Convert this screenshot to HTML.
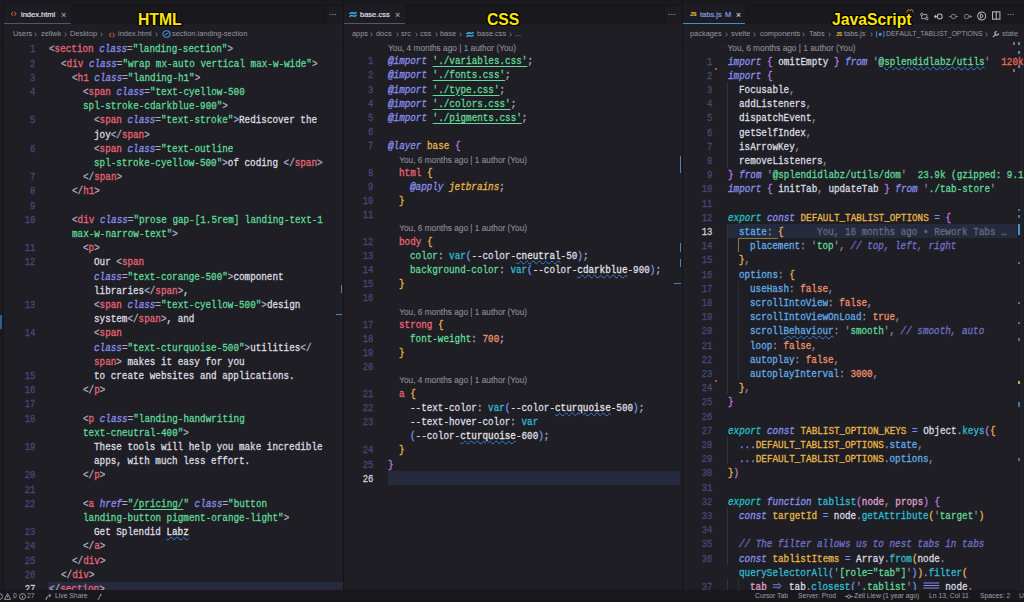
<!DOCTYPE html>
<html><head><meta charset="utf-8">
<style>
*{margin:0;padding:0;box-sizing:border-box}
html,body{width:1024px;height:602px;overflow:hidden;background:#1a191d}
body{position:relative;font-family:"Liberation Sans",sans-serif}
.pane{position:absolute;top:0;height:590px;background:#1f1e24;overflow:hidden}
.pane::before{content:"";position:absolute;left:0;right:0;top:0;height:5px;background:#1a191d}
.tabs{position:absolute;left:0;top:5px;right:0;height:19px;background:#19181c;border-top:1px solid #151418}
.tab{position:absolute;left:0;top:-1px;height:19px;background:#1d1c22;border-bottom:1px solid #555565}
.tt{position:absolute;top:0;line-height:20.5px;font-size:8px;transform-origin:0 0;transform:scaleX(0.94);color:#e6e6ec;-webkit-text-stroke:0.15px currentColor;white-space:nowrap}
.crumbs{position:absolute;left:0;top:24px;right:0;height:17.5px;background:#1f1e24;border-bottom:1px solid #1b1a1f}
.cb{position:absolute;top:0;line-height:20.5px;font-size:8px;color:#9696a0;transform-origin:0 0;transform:scaleX(0.925);white-space:nowrap}
.chev{position:absolute;top:0;line-height:20px;font-size:8px;color:#77777f}
.code,.ln{position:absolute;font-family:"Liberation Mono",monospace;font-size:10.4px;line-height:14.18px;height:14.18px;white-space:pre;-webkit-text-stroke:0.28px currentColor}
.code{transform-origin:0 0;transform:scaleX(0.894)}
.ln{color:#46487a;text-align:right;transform-origin:100% 0;transform:scaleX(0.86)}
.ln.cur{color:#d2d2da}
.curl{position:absolute;background:#262a3d}
.cl{position:absolute;font-size:8.3px;line-height:12.4px;color:#8e8e98;-webkit-text-stroke:0.1px currentColor;white-space:pre}
.w{color:#dedee4}
.pd{color:#8e8ea2}
.p{color:#acacc0}
.t{color:#ea6678}
.a{color:#8b90ee;font-style:italic}
.s{color:#60db9a}
.su{color:#60db9a;text-decoration:underline;text-decoration-thickness:1px;text-underline-offset:1.5px}
.sq{text-decoration:underline wavy #3a7fdc;text-decoration-thickness:0.8px;color:#e6e6ea}
.sqs{color:#60db9a;text-decoration:underline wavy #3a7fdc;text-decoration-thickness:0.8px}
.k{color:#8b90ee;font-style:italic}
.kt{color:#22c2c6;font-style:italic}
.op{color:#8088ea}
.y{color:#e8b84a}
.yi{color:#e8b84a;font-style:italic}
.pu{color:#c07ae0}
.cy{color:#2fbfd6}
.bl{color:#6c9df2}
.n{color:#f0936a}
.lb{color:#62aeea}
.lbq{color:#62aeea;text-decoration:underline wavy #3a7fdc;text-decoration-thickness:0.8px}
.cm{color:#6f72c8;font-style:italic}
.pk{color:#e0a2d0}
.rd{color:#ec6b5c}
.gl{color:#686b82}
.label{position:absolute;font-family:"Liberation Sans",sans-serif;font-weight:bold;font-size:17px;color:#ffe600;line-height:17px;transform-origin:0 0;transform:scaleX(0.925);white-space:nowrap;text-shadow:-1px -1px 0 #000,1px -1px 0 #000,-1px 1px 0 #000,1px 1px 0 #000,0 1.4px 0 #000,0 -1.4px 0 #000,1.4px 0 0 #000,-1.4px 0 0 #000}
.status{position:absolute;left:0;top:590px;width:1024px;height:12px;background:#19181d;border-bottom:2.7px solid #151418;color:#a0a0a8;font-size:7.3px;line-height:12px;white-space:nowrap}
.status span{transform-origin:0 0;transform:scaleX(0.93)}
.status span{position:absolute;top:0}
.rule{position:absolute;top:41px;bottom:0;width:1px;background:#26252c}
.mk{position:absolute;background:#3a86c8}
svg{position:absolute;overflow:visible}
.crumbs svg{margin-top:1px}
</style></head><body>

<!-- HTML pane -->
<div class="pane" style="left:4px;width:339.5px">
  <div class="tabs">
    <div class="tab" style="width:67px">
      <svg style="left:7.3px;top:6px" width="5.5" height="5.5" viewBox="0 0 6 6"><path d="M2.2 0.8 L0.6 3 L2.2 5.2 M3.8 0.8 L5.4 3 L3.8 5.2" stroke="#c05a3a" stroke-width="1.1" fill="none"/></svg>
      <span class="tt" style="left:17.3px">index.html</span>
      <span class="tt" style="left:57px;color:#a8a8b0;font-size:9.5px">×</span>
    </div>
    <div style="position:absolute;left:321px;top:0;width:18px;height:19px;background:#1c1b20;border-left:1px solid #161519"></div>
    <span class="tt" style="left:325px;color:#b0b0b8;font-size:8px;line-height:17px">···</span>
  </div>
  <div class="crumbs">
    <span class="cb" style="left:8.7px">Users</span><svg class="chv" style="left:29.7px;top:6.6px" width="3" height="5" viewBox="0 0 3 5"><path d="M0.8 0.7 L2.3 2.5 L0.8 4.3" stroke="#85858f" stroke-width="0.85" fill="none"/></svg>
    <span class="cb" style="left:37px">zellwk</span><svg class="chv" style="left:60.1px;top:6.6px" width="3" height="5" viewBox="0 0 3 5"><path d="M0.8 0.7 L2.3 2.5 L0.8 4.3" stroke="#85858f" stroke-width="0.85" fill="none"/></svg>
    <span class="cb" style="left:66px">Desktop</span><svg class="chv" style="left:96.2px;top:6.6px" width="3" height="5" viewBox="0 0 3 5"><path d="M0.8 0.7 L2.3 2.5 L0.8 4.3" stroke="#85858f" stroke-width="0.85" fill="none"/></svg>
    <svg style="left:105px;top:6.5px" width="6" height="6" viewBox="0 0 6 6"><path d="M2.2 0.8 L0.6 3 L2.2 5.2 M3.8 0.8 L5.4 3 L3.8 5.2" stroke="#b05a3c" stroke-width="1.1" fill="none"/></svg>
    <span class="cb" style="left:114px">index.html</span><svg class="chv" style="left:150.6px;top:6.6px" width="3" height="5" viewBox="0 0 3 5"><path d="M0.8 0.7 L2.3 2.5 L0.8 4.3" stroke="#85858f" stroke-width="0.85" fill="none"/></svg>
    <svg style="left:157.5px;top:5px" width="9" height="8" viewBox="0 0 9 8"><ellipse cx="4.5" cy="4" rx="3.6" ry="3.2" stroke="#4f8fdc" stroke-width="1.1" fill="none"/><path d="M2.5 5 L6.5 3" stroke="#4f8fdc" stroke-width="1"/></svg>
    <span class="cb" style="left:167.5px">section.landing-section</span>
  </div>
    <div class="mk" style="left:336.5px;top:285px;width:1.5px;height:7.5px"></div>
  <div class="mk" style="left:332px;top:313.5px;width:6px;height:1.2px"></div>
  <div class="ed">
<div class="ln" style="top:42.40px;right:308.50px">1</div>
<div class="code" style="top:42.40px;left:45.40px"><span class="p">&lt;</span><span class="t">section</span><span class="w"> </span><span class="a">class</span><span class="p">=</span><span class="s">&quot;landing-section&quot;</span><span class="p">&gt;</span></div>
<div class="ln" style="top:56.60px;right:308.50px">2</div>
<div class="code" style="top:56.60px;left:56.56px"><span class="p">&lt;</span><span class="t">div</span><span class="w"> </span><span class="a">class</span><span class="p">=</span><span class="s">&quot;wrap mx-auto vertical max-w-wide&quot;</span><span class="p">&gt;</span></div>
<div class="ln" style="top:70.80px;right:308.50px">3</div>
<div class="code" style="top:70.80px;left:67.72px"><span class="p">&lt;</span><span class="t">h1</span><span class="w"> </span><span class="a">class</span><span class="p">=</span><span class="s">&quot;landing-h1&quot;</span><span class="p">&gt;</span></div>
<div class="ln" style="top:85.00px;right:308.50px">4</div>
<div class="code" style="top:85.00px;left:78.88px"><span class="p">&lt;</span><span class="t">span</span><span class="w"> </span><span class="a">class</span><span class="p">=</span><span class="s">&quot;text-cyellow-500</span></div>
<div class="code" style="top:99.20px;left:78.88px"><span class="s">spl-stroke-cdarkblue-900&quot;</span><span class="p">&gt;</span></div>
<div class="ln" style="top:113.40px;right:308.50px">5</div>
<div class="code" style="top:113.40px;left:90.04px"><span class="p">&lt;</span><span class="t">span</span><span class="w"> </span><span class="a">class</span><span class="p">=</span><span class="s">&quot;text-stroke&quot;</span><span class="p">&gt;</span><span class="w">Rediscover the</span></div>
<div class="code" style="top:127.60px;left:90.04px"><span class="w">joy</span><span class="p">&lt;/</span><span class="t">span</span><span class="p">&gt;</span></div>
<div class="ln" style="top:141.80px;right:308.50px">6</div>
<div class="code" style="top:141.80px;left:90.04px"><span class="p">&lt;</span><span class="t">span</span><span class="w"> </span><span class="a">class</span><span class="p">=</span><span class="s">&quot;text-outline</span></div>
<div class="code" style="top:156.00px;left:90.04px"><span class="s">spl-stroke-cyellow-500&quot;</span><span class="p">&gt;</span><span class="w">of coding </span><span class="p">&lt;/</span><span class="t">span</span><span class="p">&gt;</span></div>
<div class="ln" style="top:170.20px;right:308.50px">7</div>
<div class="code" style="top:170.20px;left:78.88px"><span class="p">&lt;/</span><span class="t">span</span><span class="p">&gt;</span></div>
<div class="ln" style="top:184.40px;right:308.50px">8</div>
<div class="code" style="top:184.40px;left:67.72px"><span class="p">&lt;/</span><span class="t">h1</span><span class="p">&gt;</span></div>
<div class="ln" style="top:198.60px;right:308.50px">9</div>
<div class="code" style="top:198.60px;left:45.40px"></div>
<div class="ln" style="top:212.80px;right:308.50px">10</div>
<div class="code" style="top:212.80px;left:67.72px"><span class="p">&lt;</span><span class="t">div</span><span class="w"> </span><span class="a">class</span><span class="p">=</span><span class="s">&quot;prose gap-[1.5rem] landing-text-1</span></div>
<div class="code" style="top:227.00px;left:67.72px"><span class="s">max-w-narrow-text&quot;</span><span class="p">&gt;</span></div>
<div class="ln" style="top:241.20px;right:308.50px">11</div>
<div class="code" style="top:241.20px;left:78.88px"><span class="p">&lt;</span><span class="t">p</span><span class="p">&gt;</span></div>
<div class="ln" style="top:255.40px;right:308.50px">12</div>
<div class="code" style="top:255.40px;left:90.04px"><span class="w">Our </span><span class="p">&lt;</span><span class="t">span</span></div>
<div class="code" style="top:269.60px;left:90.04px"><span class="a">class</span><span class="p">=</span><span class="s">&quot;text-corange-500&quot;</span><span class="p">&gt;</span><span class="w">component</span></div>
<div class="code" style="top:283.80px;left:90.04px"><span class="w">libraries</span><span class="p">&lt;/</span><span class="t">span</span><span class="p">&gt;</span><span class="w">,</span></div>
<div class="ln" style="top:298.00px;right:308.50px">13</div>
<div class="code" style="top:298.00px;left:90.04px"><span class="p">&lt;</span><span class="t">span</span><span class="w"> </span><span class="a">class</span><span class="p">=</span><span class="s">&quot;text-cyellow-500&quot;</span><span class="p">&gt;</span><span class="w">design</span></div>
<div class="code" style="top:312.20px;left:90.04px"><span class="w">system</span><span class="p">&lt;/</span><span class="t">span</span><span class="p">&gt;</span><span class="w">, and</span></div>
<div class="ln" style="top:326.40px;right:308.50px">14</div>
<div class="code" style="top:326.40px;left:90.04px"><span class="p">&lt;</span><span class="t">span</span></div>
<div class="code" style="top:340.60px;left:90.04px"><span class="a">class</span><span class="p">=</span><span class="s">&quot;text-cturquoise-500&quot;</span><span class="p">&gt;</span><span class="w">utilities</span><span class="p">&lt;/</span></div>
<div class="code" style="top:354.80px;left:90.04px"><span class="t">span</span><span class="p">&gt;</span><span class="w"> makes it easy for you</span></div>
<div class="ln" style="top:369.00px;right:308.50px">15</div>
<div class="code" style="top:369.00px;left:90.04px"><span class="w">to create websites and applications.</span></div>
<div class="ln" style="top:383.20px;right:308.50px">16</div>
<div class="code" style="top:383.20px;left:78.88px"><span class="p">&lt;/</span><span class="t">p</span><span class="p">&gt;</span></div>
<div class="ln" style="top:397.40px;right:308.50px">17</div>
<div class="code" style="top:397.40px;left:45.40px"></div>
<div class="ln" style="top:411.60px;right:308.50px">18</div>
<div class="code" style="top:411.60px;left:78.88px"><span class="p">&lt;</span><span class="t">p</span><span class="w"> </span><span class="a">class</span><span class="p">=</span><span class="s">&quot;landing-handwriting</span></div>
<div class="code" style="top:425.80px;left:78.88px"><span class="s">text-cneutral-400&quot;</span><span class="p">&gt;</span></div>
<div class="ln" style="top:440.00px;right:308.50px">19</div>
<div class="code" style="top:440.00px;left:90.04px"><span class="w">These tools will help you make incredible</span></div>
<div class="code" style="top:454.20px;left:90.04px"><span class="w">apps, with much less effort.</span></div>
<div class="ln" style="top:468.40px;right:308.50px">20</div>
<div class="code" style="top:468.40px;left:78.88px"><span class="p">&lt;/</span><span class="t">p</span><span class="p">&gt;</span></div>
<div class="ln" style="top:482.60px;right:308.50px">21</div>
<div class="code" style="top:482.60px;left:45.40px"></div>
<div class="ln" style="top:496.80px;right:308.50px">22</div>
<div class="code" style="top:496.80px;left:78.88px"><span class="p">&lt;</span><span class="t">a</span><span class="w"> </span><span class="a">href</span><span class="p">=</span><span class="s">&quot;</span><span class="su">/pricing/</span><span class="s">&quot;</span><span class="w"> </span><span class="a">class</span><span class="p">=</span><span class="s">&quot;button</span></div>
<div class="code" style="top:511.00px;left:78.88px"><span class="s">landing-button pigment-orange-light&quot;</span><span class="p">&gt;</span></div>
<div class="ln" style="top:525.20px;right:308.50px">23</div>
<div class="code" style="top:525.20px;left:90.04px"><span class="w">Get Splendid </span><span class="sq">Labz</span></div>
<div class="ln" style="top:539.40px;right:308.50px">24</div>
<div class="code" style="top:539.40px;left:78.88px"><span class="p">&lt;/</span><span class="t">a</span><span class="p">&gt;</span></div>
<div class="ln" style="top:553.60px;right:308.50px">25</div>
<div class="code" style="top:553.60px;left:67.72px"><span class="p">&lt;/</span><span class="t">div</span><span class="p">&gt;</span></div>
<div class="ln" style="top:567.80px;right:308.50px">26</div>
<div class="code" style="top:567.80px;left:56.56px"><span class="p">&lt;/</span><span class="t">div</span><span class="p">&gt;</span></div>
<div class="curl" style="top:581.60px;left:44.00px;width:295.00px;height:14.20px"></div>
<div class="ln cur" style="top:582.00px;right:308.50px">27</div>
<div class="code" style="top:582.00px;left:45.40px"><span class="p">&lt;/</span><span class="t">section</span><span class="p">&gt;</span></div>
  </div>
</div>
<div style="position:absolute;left:0;top:0;width:4px;height:590px;background:#1b1a1f;border-right:1px solid #151418"></div>
<div class="mk" style="left:0;top:315px;width:2px;height:14px;background:#2f5f8e"></div>

<!-- CSS pane -->
<div class="pane" style="left:344px;width:337.5px">
  <div class="tabs">
    <div class="tab" style="width:61px">
      <svg style="left:5px;top:5.5px" width="8" height="7" viewBox="0 0 8 7"><path d="M0.5 3 Q2 1 4 2 Q6 3 7.5 1.2 M0.5 5.8 Q2 3.8 4 4.8 Q6 5.8 7.5 4" stroke="#38b2e8" stroke-width="1.5" fill="none"/></svg>
      <span class="tt" style="left:16px">base.css</span>
      <span class="tt" style="left:50.5px;color:#a8a8b0;font-size:9.5px">×</span>
    </div>
    <div style="position:absolute;left:320px;top:0;width:18px;height:19px;background:#1c1b20;border-left:1px solid #161519"></div>
    <span class="tt" style="left:324px;color:#b0b0b8;font-size:8px;line-height:17px">···</span>
  </div>
  <div class="crumbs">
    <span class="cb" style="left:7.8px">apps</span><svg class="chv" style="left:26.3px;top:6.6px" width="3" height="5" viewBox="0 0 3 5"><path d="M0.8 0.7 L2.3 2.5 L0.8 4.3" stroke="#85858f" stroke-width="0.85" fill="none"/></svg>
    <span class="cb" style="left:32px">docs</span><svg class="chv" style="left:51.5px;top:6.6px" width="3" height="5" viewBox="0 0 3 5"><path d="M0.8 0.7 L2.3 2.5 L0.8 4.3" stroke="#85858f" stroke-width="0.85" fill="none"/></svg>
    <span class="cb" style="left:57px">src</span><svg class="chv" style="left:70.7px;top:6.6px" width="3" height="5" viewBox="0 0 3 5"><path d="M0.8 0.7 L2.3 2.5 L0.8 4.3" stroke="#85858f" stroke-width="0.85" fill="none"/></svg>
    <span class="cb" style="left:76px">css</span><svg class="chv" style="left:90.5px;top:6.6px" width="3" height="5" viewBox="0 0 3 5"><path d="M0.8 0.7 L2.3 2.5 L0.8 4.3" stroke="#85858f" stroke-width="0.85" fill="none"/></svg>
    <span class="cb" style="left:95.8px">base</span><svg class="chv" style="left:115.0px;top:6.6px" width="3" height="5" viewBox="0 0 3 5"><path d="M0.8 0.7 L2.3 2.5 L0.8 4.3" stroke="#85858f" stroke-width="0.85" fill="none"/></svg>
    <svg style="left:121.5px;top:5.5px" width="8" height="7" viewBox="0 0 8 7"><path d="M0.5 3 Q2 1 4 2 Q6 3 7.5 1.2 M0.5 5.8 Q2 3.8 4 4.8 Q6 5.8 7.5 4" stroke="#38b2e8" stroke-width="1.4" fill="none"/></svg>
    <span class="cb" style="left:132.6px">base.css</span><svg class="chv" style="left:165.0px;top:6.6px" width="3" height="5" viewBox="0 0 3 5"><path d="M0.8 0.7 L2.3 2.5 L0.8 4.3" stroke="#85858f" stroke-width="0.85" fill="none"/></svg>
    <span class="cb" style="left:171px">...</span>
  </div>
    <div class="mk" style="left:335.5px;top:156px;width:1.5px;height:17px"></div>
  <div class="mk" style="left:335.5px;top:242.5px;width:1.5px;height:9px"></div>
  <div class="mk" style="left:335.5px;top:259px;width:1.5px;height:8px"></div>
  <div class="mk" style="left:330px;top:283px;width:7px;height:1.2px"></div>
  <div class="ed">
<div class="cl" style="left:44.00px;top:42.05px">You, 4 months ago | 1 author (You)</div>
<div class="ln" style="top:54.15px;right:308.00px">1</div>
<div class="code" style="top:54.15px;left:44.00px"><span class="k">@import</span><span class="w"> </span><span class="su">&#x27;./variables.css&#x27;</span><span class="p">;</span></div>
<div class="ln" style="top:68.35px;right:308.00px">2</div>
<div class="code" style="top:68.35px;left:44.00px"><span class="k">@import</span><span class="w"> </span><span class="su">&#x27;./fonts.css&#x27;</span><span class="p">;</span></div>
<div class="ln" style="top:82.55px;right:308.00px">3</div>
<div class="code" style="top:82.55px;left:44.00px"><span class="k">@import</span><span class="w"> </span><span class="su">&#x27;./type.css&#x27;</span><span class="p">;</span></div>
<div class="ln" style="top:96.75px;right:308.00px">4</div>
<div class="code" style="top:96.75px;left:44.00px"><span class="k">@import</span><span class="w"> </span><span class="su">&#x27;./colors.css&#x27;</span><span class="p">;</span></div>
<div class="ln" style="top:110.95px;right:308.00px">5</div>
<div class="code" style="top:110.95px;left:44.00px"><span class="k">@import</span><span class="w"> </span><span class="su">&#x27;./pigments.css&#x27;</span><span class="p">;</span></div>
<div class="ln" style="top:125.15px;right:308.00px">6</div>
<div class="code" style="top:125.15px;left:44.00px"></div>
<div class="ln" style="top:139.35px;right:308.00px">7</div>
<div class="code" style="top:139.35px;left:44.00px"><span class="k">@layer</span><span class="w"> </span><span class="y">base</span><span class="w"> </span><span class="pu">{</span></div>
<div class="cl" style="left:55.16px;top:153.55px">You, 6 months ago | 1 author (You)</div>
<div class="ln" style="top:165.65px;right:308.00px">8</div>
<div class="code" style="top:165.65px;left:55.16px"><span class="t">html</span><span class="w"> </span><span class="y">{</span></div>
<div class="ln" style="top:179.85px;right:308.00px">9</div>
<div class="code" style="top:179.85px;left:66.32px"><span class="k">@apply</span><span class="w"> </span><span class="yi">jetbrains</span><span class="p">;</span></div>
<div class="ln" style="top:194.05px;right:308.00px">10</div>
<div class="code" style="top:194.05px;left:55.16px"><span class="y">}</span></div>
<div class="ln" style="top:208.25px;right:308.00px">11</div>
<div class="code" style="top:208.25px;left:44.00px"></div>
<div class="cl" style="left:55.16px;top:222.45px">You, 6 months ago | 1 author (You)</div>
<div class="ln" style="top:234.55px;right:308.00px">12</div>
<div class="code" style="top:234.55px;left:55.16px"><span class="t">body</span><span class="w"> </span><span class="y">{</span></div>
<div class="ln" style="top:248.75px;right:308.00px">13</div>
<div class="code" style="top:248.75px;left:66.32px"><span class="s">color</span><span class="p">:</span><span class="w"> </span><span class="cy">var</span><span class="bl">(</span><span class="w">--color-</span><span class="sq">cneutral</span><span class="w">-50</span><span class="bl">)</span><span class="p">;</span></div>
<div class="ln" style="top:262.95px;right:308.00px">14</div>
<div class="code" style="top:262.95px;left:66.32px"><span class="s">background-color</span><span class="p">:</span><span class="w"> </span><span class="cy">var</span><span class="bl">(</span><span class="w">--color-</span><span class="sq">cdarkblue</span><span class="w">-900</span><span class="bl">)</span><span class="p">;</span></div>
<div class="ln" style="top:277.15px;right:308.00px">15</div>
<div class="code" style="top:277.15px;left:55.16px"><span class="y">}</span></div>
<div class="ln" style="top:291.35px;right:308.00px">16</div>
<div class="code" style="top:291.35px;left:44.00px"></div>
<div class="cl" style="left:55.16px;top:305.55px">You, 6 months ago | 1 author (You)</div>
<div class="ln" style="top:317.65px;right:308.00px">17</div>
<div class="code" style="top:317.65px;left:55.16px"><span class="t">strong</span><span class="w"> </span><span class="y">{</span></div>
<div class="ln" style="top:331.85px;right:308.00px">18</div>
<div class="code" style="top:331.85px;left:66.32px"><span class="s">font-weight</span><span class="p">:</span><span class="w"> </span><span class="n">700</span><span class="p">;</span></div>
<div class="ln" style="top:346.05px;right:308.00px">19</div>
<div class="code" style="top:346.05px;left:55.16px"><span class="y">}</span></div>
<div class="ln" style="top:360.25px;right:308.00px">20</div>
<div class="code" style="top:360.25px;left:44.00px"></div>
<div class="cl" style="left:55.16px;top:374.45px">You, 4 months ago | 1 author (You)</div>
<div class="ln" style="top:386.55px;right:308.00px">21</div>
<div class="code" style="top:386.55px;left:55.16px"><span class="t">a</span><span class="w"> </span><span class="y">{</span></div>
<div class="ln" style="top:400.75px;right:308.00px">22</div>
<div class="code" style="top:400.75px;left:66.32px"><span class="w">--text-color</span><span class="p">:</span><span class="w"> </span><span class="cy">var</span><span class="bl">(</span><span class="w">--color-</span><span class="sq">cturquoise</span><span class="w">-500</span><span class="bl">)</span><span class="p">;</span></div>
<div class="ln" style="top:414.95px;right:308.00px">23</div>
<div class="code" style="top:414.95px;left:66.32px"><span class="w">--text-hover-color</span><span class="p">:</span><span class="w"> </span><span class="cy">var</span></div>
<div class="code" style="top:429.15px;left:66.32px"><span class="bl">(</span><span class="w">--color-</span><span class="sq">cturquoise</span><span class="w">-600</span><span class="bl">)</span><span class="p">;</span></div>
<div class="ln" style="top:443.35px;right:308.00px">24</div>
<div class="code" style="top:443.35px;left:55.16px"><span class="y">}</span></div>
<div class="ln" style="top:457.55px;right:308.00px">25</div>
<div class="code" style="top:457.55px;left:44.00px"><span class="pu">}</span></div>
<div class="curl" style="top:470.85px;left:44.00px;width:292.00px;height:14.20px"></div>
<div class="ln cur" style="top:471.75px;right:308.00px">26</div>
<div class="code" style="top:471.75px;left:44.00px"></div>
  </div>
</div>
<div style="position:absolute;left:343px;top:0;width:1px;height:590px;background:#141318"></div>
<div style="position:absolute;left:681.5px;top:0;width:1px;height:590px;background:#141318"></div>

<!-- JS pane -->
<div class="pane" style="left:682.5px;width:341.5px">
  <div class="tabs">
    <div class="tab" style="width:62px;border-bottom-color:#3f8fd2">
      <span class="tt" style="left:7.5px;color:#e0c23a;font-size:5.5px;font-weight:bold;line-height:18px">JS</span>
      <span class="tt" style="left:17.5px;color:#8aa6e8">tabs.js</span>
      <span class="tt" style="left:42px;color:#8aa6e8">M</span>
      <span class="tt" style="left:53px;color:#d6d6de;font-size:9px">×</span>
    </div>
    <svg style="left:237.8px;top:5.5px" width="8.5" height="9" viewBox="0 0 10 9"><circle cx="2" cy="2" r="1.4" stroke="#b8b8c0" fill="none" stroke-width="1"/><circle cx="8" cy="7" r="1.4" stroke="#b8b8c0" fill="none" stroke-width="1"/><path d="M2 3.4 V7 H6.6 M8 5.6 V2 H3.4" stroke="#b8b8c0" fill="none" stroke-width="1"/></svg>
    <svg style="left:251px;top:5.5px" width="9.5" height="9" viewBox="0 0 10 9"><circle cx="6" cy="4.5" r="2.6" stroke="#b8b8c0" fill="none" stroke-width="1.1"/><path d="M0.5 4.5 H3.4 M2 3 L0.5 4.5 L2 6" stroke="#b8b8c0" fill="none" stroke-width="1.1"/></svg>
    <svg style="left:266px;top:5.5px" width="9" height="9" viewBox="0 0 10 9"><circle cx="5" cy="4.5" r="2.5" stroke="#8a8a92" fill="none" stroke-width="1"/><path d="M0 4.5 H2.5 M7.5 4.5 H10" stroke="#8a8a92" fill="none" stroke-width="1"/></svg>
    <svg style="left:280px;top:5.5px" width="9" height="9" viewBox="0 0 10 9"><circle cx="4" cy="4.5" r="2.5" stroke="#8a8a92" fill="none" stroke-width="1"/><path d="M6.5 4.5 H9.5 M8 3 L9.5 4.5 L8 6" stroke="#8a8a92" fill="none" stroke-width="1"/></svg>
    <svg style="left:294.2px;top:4.6px" width="9.3" height="10" viewBox="0 0 10 10"><circle cx="5" cy="5" r="4.3" stroke="#b8b8c0" fill="none" stroke-width="1.1"/><path d="M3.8 2.5 L6.8 5 L3.8 7.5 M3.8 2.5 V7.5" stroke="#b8b8c0" fill="none" stroke-width="1"/></svg>
    <svg style="left:309.3px;top:5.2px" width="8.5" height="9" viewBox="0 0 9 9"><rect x="0.6" y="0.6" width="7.8" height="7.8" stroke="#b8b8c0" fill="none" stroke-width="1.1"/><path d="M4.5 0.6 V8.4" stroke="#b8b8c0" stroke-width="1.1"/></svg>
    <span class="tt" style="left:324px;color:#b0b0b8;font-size:8px;line-height:17px">···</span>
  </div>
  <div class="crumbs">
    <span class="cb" style="left:7.8px">packages</span><svg class="chv" style="left:42.4px;top:6.6px" width="3" height="5" viewBox="0 0 3 5"><path d="M0.8 0.7 L2.3 2.5 L0.8 4.3" stroke="#85858f" stroke-width="0.85" fill="none"/></svg>
    <span class="cb" style="left:48.8px">svelte</span><svg class="chv" style="left:70.6px;top:6.6px" width="3" height="5" viewBox="0 0 3 5"><path d="M0.8 0.7 L2.3 2.5 L0.8 4.3" stroke="#85858f" stroke-width="0.85" fill="none"/></svg>
    <span class="cb" style="left:77.1px">components</span><svg class="chv" style="left:119.9px;top:6.6px" width="3" height="5" viewBox="0 0 3 5"><path d="M0.8 0.7 L2.3 2.5 L0.8 4.3" stroke="#85858f" stroke-width="0.85" fill="none"/></svg>
    <span class="cb" style="left:126.1px">Tabs</span><svg class="chv" style="left:145.0px;top:6.6px" width="3" height="5" viewBox="0 0 3 5"><path d="M0.8 0.7 L2.3 2.5 L0.8 4.3" stroke="#85858f" stroke-width="0.85" fill="none"/></svg>
    <span class="cb" style="left:153.5px;color:#e0c23a;font-size:5.5px;font-weight:bold">JS</span>
    <span class="cb" style="left:161.8px">tabs.js</span><svg class="chv" style="left:187.4px;top:6.6px" width="3" height="5" viewBox="0 0 3 5"><path d="M0.8 0.7 L2.3 2.5 L0.8 4.3" stroke="#85858f" stroke-width="0.85" fill="none"/></svg>
    <svg style="left:193.3px;top:5.8px" width="8.5" height="6.5" viewBox="0 0 10 7"><path d="M1.8 0.6 H0.6 V6.4 H1.8 M8.2 0.6 H9.4 V6.4 H8.2" stroke="#4f8fdc" stroke-width="1" fill="none"/><circle cx="5" cy="3.5" r="1.8" fill="#4f8fdc"/></svg>
    <span class="cb" style="left:203.1px;transform:scaleX(0.86);transform-origin:0 0">DEFAULT_TABLIST_OPTIONS</span><svg class="chv" style="left:302.9px;top:6.6px" width="3" height="5" viewBox="0 0 3 5"><path d="M0.8 0.7 L2.3 2.5 L0.8 4.3" stroke="#85858f" stroke-width="0.85" fill="none"/></svg>
    <svg style="left:309.5px;top:4.5px" width="8" height="8" viewBox="0 0 9 9"><path d="M1 8 L5 4 M5.2 1.5 A2.2 2.2 0 1 0 7.5 3.8" stroke="#b0b0b8" stroke-width="1.3" fill="none"/></svg>
    <span class="cb" style="left:319.3px">state</span>
  </div>
    <div class="mk" style="left:330.5px;top:41.8px;width:2px;height:3px;background:#a0607a"></div>
  <div class="mk" style="left:335.1px;top:41.8px;width:2px;height:3px;background:#4a88c0"></div>
  <div class="mk" style="left:335.1px;top:51.1px;width:2px;height:3px;background:#4a88c0"></div>
  <div class="mk" style="left:335.1px;top:65.0px;width:2px;height:3px;background:#4a88c0"></div>
  <div class="mk" style="left:330.5px;top:69.0px;width:2px;height:3px;background:#a0607a"></div>
  <div class="mk" style="left:335.1px;top:208.8px;width:2px;height:2.5px;background:#3a78b0"></div>
  <div class="mk" style="left:335.1px;top:215.3px;width:2px;height:2.5px;background:#3a78b0"></div>
  <div class="mk" style="left:335.1px;top:224.0px;width:2px;height:6px;background:#4a90d0"></div>
  <div class="mk" style="left:335.1px;top:261.8px;width:2px;height:2.5px;background:#3a78b0"></div>
  <div class="mk" style="left:335.1px;top:301.8px;width:2px;height:2.5px;background:#3a78b0"></div>
  <div class="mk" style="left:335.1px;top:321.8px;width:2px;height:2.5px;background:#3a78b0"></div>
  <div class="mk" style="left:335.1px;top:338.2px;width:2px;height:2.5px;background:#3a78b0"></div>
  <div class="mk" style="left:335.1px;top:381.2px;width:2px;height:3px;background:#c8b040"></div>
  <div class="mk" style="left:335.1px;top:401.5px;width:2px;height:5px;background:#3a78b0"></div>
  <div class="mk" style="left:335.1px;top:457.5px;width:2px;height:3px;background:#3a78b0"></div>
  <div class="ed">
<div style="position:absolute;left:335.00px;top:226.55px;width:2.50px;height:8.00px;background:#4a90d0"></div>
<div style="position:absolute;left:44.50px;top:224.05px;width:1.00px;height:170.40px;background:#34343e"></div>
<div style="position:absolute;left:44.50px;top:82.05px;width:1.00px;height:85.20px;background:#34343e"></div>
<div style="position:absolute;left:44.50px;top:437.05px;width:1.00px;height:28.40px;background:#34343e"></div>
<div style="position:absolute;left:44.50px;top:508.05px;width:1.00px;height:56.80px;background:#34343e"></div>
<div style="position:absolute;left:44.50px;top:579.05px;width:1.00px;height:12.00px;background:#34343e"></div>
<div style="position:absolute;left:55.50px;top:579.05px;width:1.00px;height:12.00px;background:#2c2c35"></div>
<div style="position:absolute;left:55.50px;top:280.85px;width:1.00px;height:99.40px;background:#2c2c35"></div>
<div style="position:absolute;left:55.10px;top:237.65px;width:40.00px;height:1.00px;background:#8a7838"></div>
<div style="position:absolute;left:55.10px;top:237.65px;width:1.00px;height:14.20px;background:#8a7838"></div>
<div style="position:absolute;left:32.50px;top:67.65px;width:2.00px;height:2.00px;background:#c04656"></div>
<div style="position:absolute;left:32.50px;top:380.05px;width:2.00px;height:2.00px;background:#c04656"></div>
<div style="position:absolute;left:338.50px;top:41.00px;width:1.00px;height:549.00px;background:#26252c"></div>
<div class="cl" style="left:45.10px;top:42.45px">You, 6 months ago | 1 author (You)</div>
<div class="ln" style="top:54.55px;right:312.00px">1</div>
<div class="code" style="top:54.55px;left:45.10px"><span class="k">import</span><span class="w"> </span><span class="pu">{</span><span class="w"> omitEmpty </span><span class="pu">}</span><span class="w"> </span><span class="k">from</span><span class="w"> </span><span class="pd">&#x27;</span><span class="sqs">@splendidlabz/utils</span><span class="pd">&#x27;</span><span class="w">  </span><span class="rd">120k</span></div>
<div class="ln" style="top:68.75px;right:312.00px">2</div>
<div class="code" style="top:68.75px;left:45.10px"><span class="k">import</span><span class="w"> </span><span class="pu">{</span></div>
<div class="ln" style="top:82.95px;right:312.00px">3</div>
<div class="code" style="top:82.95px;left:56.26px"><span class="w">Focusable</span><span class="pd">,</span></div>
<div class="ln" style="top:97.15px;right:312.00px">4</div>
<div class="code" style="top:97.15px;left:56.26px"><span class="w">addListeners</span><span class="pd">,</span></div>
<div class="ln" style="top:111.35px;right:312.00px">5</div>
<div class="code" style="top:111.35px;left:56.26px"><span class="w">dispatchEvent</span><span class="pd">,</span></div>
<div class="ln" style="top:125.55px;right:312.00px">6</div>
<div class="code" style="top:125.55px;left:56.26px"><span class="w">getSelfIndex</span><span class="pd">,</span></div>
<div class="ln" style="top:139.75px;right:312.00px">7</div>
<div class="code" style="top:139.75px;left:56.26px"><span class="w">isArrowKey</span><span class="pd">,</span></div>
<div class="ln" style="top:153.95px;right:312.00px">8</div>
<div class="code" style="top:153.95px;left:56.26px"><span class="w">removeListeners</span><span class="pd">,</span></div>
<div class="ln" style="top:168.15px;right:312.00px">9</div>
<div class="code" style="top:168.15px;left:45.10px"><span class="pu">}</span><span class="w"> </span><span class="k">from</span><span class="w"> </span><span class="pd">&#x27;</span><span class="s">@splendidlabz/utils/dom</span><span class="pd">&#x27;</span><span class="w">  </span><span class="s">23.9k (gzipped: 9.1</span></div>
<div class="ln" style="top:182.35px;right:312.00px">10</div>
<div class="code" style="top:182.35px;left:45.10px"><span class="k">import</span><span class="w"> </span><span class="pu">{</span><span class="w"> initTab</span><span class="pd">,</span><span class="w"> updateTab </span><span class="pu">}</span><span class="w"> </span><span class="k">from</span><span class="w"> </span><span class="pd">&#x27;</span><span class="s">./tab-store</span><span class="pd">&#x27;</span></div>
<div class="ln" style="top:196.55px;right:312.00px">11</div>
<div class="code" style="top:196.55px;left:45.10px"></div>
<div class="ln" style="top:210.75px;right:312.00px">12</div>
<div class="code" style="top:210.75px;left:45.10px"><span class="kt">export</span><span class="w"> </span><span class="k">const</span><span class="w"> </span><span class="y">DEFAULT_TABLIST_OPTIONS</span><span class="w"> </span><span class="op">=</span><span class="w"> </span><span class="pu">{</span></div>
<div class="curl" style="top:224.05px;left:45.00px;width:289.50px;height:14.20px"></div>
<div class="ln cur" style="top:224.95px;right:312.00px">13</div>
<div class="code" style="top:224.95px;left:56.26px"><span class="lb">state</span><span class="pd">:</span><span class="w"> </span><span class="y">{</span><span class="w">      </span><span class="gl">You, 16 months ago • Rework Tabs …</span></div>
<div class="ln" style="top:239.15px;right:312.00px">14</div>
<div class="code" style="top:239.15px;left:67.42px"><span class="lb">placement</span><span class="pd">:</span><span class="w"> </span><span class="pd">&#x27;</span><span class="s">top</span><span class="pd">&#x27;</span><span class="pd">,</span><span class="w"> </span><span class="cm">// top, left, right</span></div>
<div class="ln" style="top:253.35px;right:312.00px">15</div>
<div class="code" style="top:253.35px;left:56.26px"><span class="y">}</span><span class="pd">,</span></div>
<div class="ln" style="top:267.55px;right:312.00px">16</div>
<div class="code" style="top:267.55px;left:56.26px"><span class="lb">options</span><span class="pd">:</span><span class="w"> </span><span class="y">{</span></div>
<div class="ln" style="top:281.75px;right:312.00px">17</div>
<div class="code" style="top:281.75px;left:67.42px"><span class="lb">useHash</span><span class="pd">:</span><span class="w"> </span><span class="n">false</span><span class="pd">,</span></div>
<div class="ln" style="top:295.95px;right:312.00px">18</div>
<div class="code" style="top:295.95px;left:67.42px"><span class="lb">scrollIntoView</span><span class="pd">:</span><span class="w"> </span><span class="n">false</span><span class="pd">,</span></div>
<div class="ln" style="top:310.15px;right:312.00px">19</div>
<div class="code" style="top:310.15px;left:67.42px"><span class="lb">scrollIntoViewOnLoad</span><span class="pd">:</span><span class="w"> </span><span class="n">true</span><span class="pd">,</span></div>
<div class="ln" style="top:324.35px;right:312.00px">20</div>
<div class="code" style="top:324.35px;left:67.42px"><span class="lb">scroll</span><span class="lbq">Behaviour</span><span class="pd">:</span><span class="w"> </span><span class="pd">&#x27;</span><span class="s">smooth</span><span class="pd">&#x27;</span><span class="pd">,</span><span class="w"> </span><span class="cm">// smooth, auto</span></div>
<div class="ln" style="top:338.55px;right:312.00px">21</div>
<div class="code" style="top:338.55px;left:67.42px"><span class="lb">loop</span><span class="pd">:</span><span class="w"> </span><span class="n">false</span><span class="pd">,</span></div>
<div class="ln" style="top:352.75px;right:312.00px">22</div>
<div class="code" style="top:352.75px;left:67.42px"><span class="lb">autoplay</span><span class="pd">:</span><span class="w"> </span><span class="n">false</span><span class="pd">,</span></div>
<div class="ln" style="top:366.95px;right:312.00px">23</div>
<div class="code" style="top:366.95px;left:67.42px"><span class="lb">autoplayInterval</span><span class="pd">:</span><span class="w"> </span><span class="n">3000</span><span class="pd">,</span></div>
<div class="ln" style="top:381.15px;right:312.00px">24</div>
<div class="code" style="top:381.15px;left:56.26px"><span class="y">}</span><span class="pd">,</span></div>
<div class="ln" style="top:395.35px;right:312.00px">25</div>
<div class="code" style="top:395.35px;left:45.10px"><span class="pu">}</span></div>
<div class="ln" style="top:409.55px;right:312.00px">26</div>
<div class="code" style="top:409.55px;left:45.10px"></div>
<div class="ln" style="top:423.75px;right:312.00px">27</div>
<div class="code" style="top:423.75px;left:45.10px"><span class="kt">export</span><span class="w"> </span><span class="k">const</span><span class="w"> </span><span class="y">TABLIST_OPTION_KEYS</span><span class="w"> </span><span class="op">=</span><span class="w"> Object</span><span class="pd">.</span><span class="cy">keys</span><span class="pu">(</span><span class="y">{</span></div>
<div class="ln" style="top:437.95px;right:312.00px">28</div>
<div class="code" style="top:437.95px;left:56.26px"><span class="op">...</span><span class="y">DEFAULT_TABLIST_OPTIONS</span><span class="pd">.</span><span class="lb">state</span><span class="pd">,</span></div>
<div class="ln" style="top:452.15px;right:312.00px">29</div>
<div class="code" style="top:452.15px;left:56.26px"><span class="op">...</span><span class="y">DEFAULT_TABLIST_OPTIONS</span><span class="pd">.</span><span class="lb">options</span><span class="pd">,</span></div>
<div class="ln" style="top:466.35px;right:312.00px">30</div>
<div class="code" style="top:466.35px;left:45.10px"><span class="y">}</span><span class="pu">)</span></div>
<div class="ln" style="top:480.55px;right:312.00px">31</div>
<div class="code" style="top:480.55px;left:45.10px"></div>
<div class="ln" style="top:494.75px;right:312.00px">32</div>
<div class="code" style="top:494.75px;left:45.10px"><span class="kt">export</span><span class="w"> </span><span class="k">function</span><span class="w"> </span><span class="cy">tablist</span><span class="pu">(</span><span class="pk">node</span><span class="pd">,</span><span class="w"> </span><span class="pk">props</span><span class="pu">)</span><span class="w"> </span><span class="pu">{</span></div>
<div class="ln" style="top:508.95px;right:312.00px">33</div>
<div class="code" style="top:508.95px;left:56.26px"><span class="k">const</span><span class="w"> </span><span class="y">targetId</span><span class="w"> </span><span class="op">=</span><span class="w"> node</span><span class="pd">.</span><span class="cy">getAttribute</span><span class="y">(</span><span class="pd">&#x27;</span><span class="s">target</span><span class="pd">&#x27;</span><span class="y">)</span></div>
<div class="ln" style="top:523.15px;right:312.00px">34</div>
<div class="code" style="top:523.15px;left:45.10px"></div>
<div class="ln" style="top:537.35px;right:312.00px">35</div>
<div class="code" style="top:537.35px;left:56.26px"><span class="cm">// The filter allows us to nest tabs in tabs</span></div>
<div class="ln" style="top:551.55px;right:312.00px">36</div>
<div class="code" style="top:551.55px;left:56.26px"><span class="k">const</span><span class="w"> </span><span class="y">tablistItems</span><span class="w"> </span><span class="op">=</span><span class="w"> Array</span><span class="pd">.</span><span class="cy">from</span><span class="y">(</span><span class="w">node</span><span class="pd">.</span></div>
<div class="code" style="top:565.75px;left:56.26px"><span class="cy">querySelectorAll</span><span class="bl">(</span><span class="pd">&#x27;</span><span class="s">[role=&quot;tab&quot;]</span><span class="pd">&#x27;</span><span class="bl">)</span><span class="y">)</span><span class="pd">.</span><span class="cy">filter</span><span class="y">(</span></div>
<div class="ln" style="top:579.95px;right:312.00px">37</div>
<div class="code" style="top:579.95px;left:67.42px"><span class="pk">tab</span><span class="w"> </span><span class="op" style="display:inline-block;width:12.48px;height:10px;vertical-align:-1px;position:relative"><svg style="left:0.5px;top:2.5px" width="11" height="6" viewBox="0 0 11.5 7"><path d="M0 2 H9 M0 5 H9 M7 0 L11 3.5 L7 7" stroke="#8088ea" stroke-width="1.1" fill="none"/></svg></span><span class="w"> tab</span><span class="pd">.</span><span class="cy">closest</span><span class="bl">(</span><span class="pd">&#x27;</span><span class="s">.tablist</span><span class="pd">&#x27;</span><span class="bl">)</span><span class="w"> </span><span class="op" style="display:inline-block;width:18.72px;height:10px;vertical-align:-1px;position:relative"><svg style="left:0.5px;top:1.5px" width="17.7" height="7" viewBox="0 0 17.7 7"><path d="M0 1 H17.7 M0 3.5 H17.7 M0 6 H17.7" stroke="#8088ea" stroke-width="1.1"/></svg></span><span class="w"> node</span><span class="pd">.</span></div>
  </div>
</div>


<svg style="left:906px;top:8px" width="8" height="5" viewBox="0 0 8 5"><path d="M0.5 4.5 L2.5 1 L4 3 L5.5 1 L7.5 4.5" stroke="#c07a30" stroke-width="0.9" fill="none"/></svg>
<div class="label" style="left:137.6px;top:10.7px">HTML</div>
<div class="label" style="left:486.8px;top:10.7px">CSS</div>
<div class="label" style="left:832.4px;top:10.7px">JavaScript</div>

<div class="status">
  <svg style="left:-4px;top:3px" width="7" height="7" viewBox="0 0 7 7"><circle cx="3.5" cy="3.5" r="3" stroke="#a0a0a8" stroke-width="0.9" fill="none"/></svg>
  <svg style="left:4px;top:2.8px" width="7" height="7" viewBox="0 0 7 7"><path d="M3.5 0.6 L6.6 6.4 H0.4 Z M3.5 2.6 V4.4" stroke="#a0a0a8" stroke-width="0.9" fill="none"/></svg>
  <span style="left:12.5px">0</span>
  <svg style="left:18.8px;top:2.8px" width="7" height="7" viewBox="0 0 7 7"><circle cx="3.5" cy="3.5" r="3" stroke="#a0a0a8" stroke-width="0.9" fill="none"/><path d="M3.5 3 V5.3 M3.5 1.7 V2.3" stroke="#a0a0a8" stroke-width="0.9"/></svg>
  <span style="left:27px">27</span>
  <svg style="left:45px;top:2.5px" width="8" height="8" viewBox="0 0 8 8"><path d="M1 7 C1 4 3 2.5 5.5 2.5 M4 0.8 L6 2.5 L4 4.2 M2.5 4.5 L1 6" stroke="#a0a0a8" stroke-width="0.9" fill="none"/></svg>
  <span style="left:54.5px">Live Share</span>
  <svg style="left:97px;top:2.5px" width="5" height="8" viewBox="0 0 5 8"><path d="M4 1 L1 7 M3 1 L4.5 2.5" stroke="#a0a0a8" stroke-width="0.9" fill="none"/></svg>
  <span style="left:754.7px">Cursor Tab</span>
  <span style="left:797.5px">Server: Prod</span>
  <svg style="left:845px;top:3.5px" width="8" height="5" viewBox="0 0 8 5"><circle cx="4" cy="2.5" r="1.6" stroke="#a0a0a8" stroke-width="0.9" fill="none"/><path d="M0 2.5 H2.4 M5.6 2.5 H8" stroke="#a0a0a8" stroke-width="0.9"/></svg>
  <span style="left:854px">Zell Liew (1 year ago)</span>
  <span style="left:928.5px">Ln 13, Col 11</span>
  <span style="left:980px">Spaces: 2</span>
  <span style="left:1019px">U</span>
</div>
</body></html>
